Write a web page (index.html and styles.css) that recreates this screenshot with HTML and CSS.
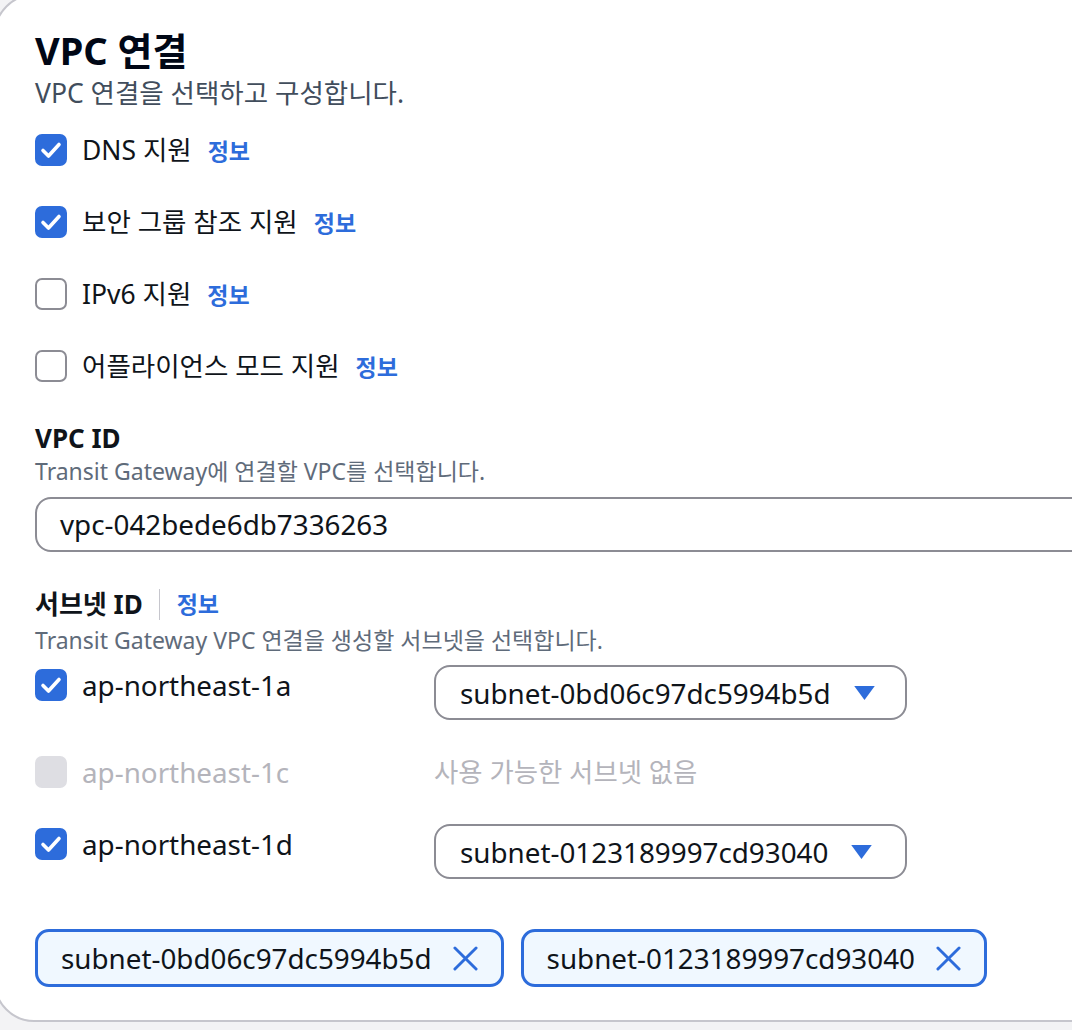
FILE: index.html
```html
<!DOCTYPE html>
<html lang="ko">
<head>
    <meta charset="UTF-8">
    <meta name="viewport" content="width=device-width, initial-scale=1.0">
    <title>VPC 연결</title>
    <link rel="stylesheet" href="styles.css">
</head>

<body>
    <div class="panel">
        <h1 class="panel-title">VPC 연결</h1>
        <p class="panel-desc">VPC 연결을 선택하고 구성합니다.</p>

        <!-- 연결 옵션 -->
        <div class="options">
            <div class="check-row">
                <span class="box checked"><svg viewBox="0 0 32 32"><polyline points="8,16.5 13.5,22 24,10.5" /></svg></span>
                <span class="check-label">DNS 지원</span>
                <a class="info">정보</a>
            </div>
            <div class="check-row">
                <span class="box checked"><svg viewBox="0 0 32 32"><polyline points="8,16.5 13.5,22 24,10.5" /></svg></span>
                <span class="check-label">보안 그룹 참조 지원</span>
                <a class="info">정보</a>
            </div>
            <div class="check-row">
                <span class="box"></span>
                <span class="check-label">IPv6 지원</span>
                <a class="info">정보</a>
            </div>
            <div class="check-row">
                <span class="box"></span>
                <span class="check-label">어플라이언스 모드 지원</span>
                <a class="info">정보</a>
            </div>
        </div>

        <!-- VPC 선택 -->
        <div class="field">
            <div class="field-label">VPC ID</div>
            <div class="field-hint">Transit Gateway에 연결할 VPC를 선택합니다.</div>
            <div class="text-input">vpc-042bede6db7336263</div>
        </div>

        <!-- 서브넷 선택 -->
        <div class="field subnet-field">
            <div class="field-label">서브넷 ID <span class="divider"></span><a class="info">정보</a></div>
            <div class="field-hint">Transit Gateway VPC 연결을 생성할 서브넷을 선택합니다.</div>

            <div class="subnet-grid">
                <div class="check-row">
                    <span class="box checked"><svg viewBox="0 0 32 32"><polyline points="8,16.5 13.5,22 24,10.5" /></svg></span>
                    <span class="check-label az">ap-northeast-1a</span>
                </div>
                <div class="select">
                    <span>subnet-0bd06c97dc5994b5d</span>
                    <svg class="caret" viewBox="0 0 22 15"><polygon points="0,0 22,0 11,15" /></svg>
                </div>

                <div class="check-row disabled">
                    <span class="box"></span>
                    <span class="check-label az">ap-northeast-1c</span>
                </div>
                <div class="no-subnet">사용 가능한 서브넷 없음</div>

                <div class="check-row">
                    <span class="box checked"><svg viewBox="0 0 32 32"><polyline points="8,16.5 13.5,22 24,10.5" /></svg></span>
                    <span class="check-label az">ap-northeast-1d</span>
                </div>
                <div class="select">
                    <span>subnet-0123189997cd93040</span>
                    <svg class="caret" viewBox="0 0 22 15"><polygon points="0,0 22,0 11,15" /></svg>
                </div>
            </div>

            <div class="tokens">
                <div class="token">
                    <span>subnet-0bd06c97dc5994b5d</span>
                    <svg class="remove" viewBox="0 0 26 26"><line x1="2" y1="2" x2="24" y2="24" /><line x1="24" y1="2" x2="2" y2="24" /></svg>
                </div>
                <div class="token">
                    <span>subnet-0123189997cd93040</span>
                    <svg class="remove" viewBox="0 0 26 26"><line x1="2" y1="2" x2="24" y2="24" /><line x1="24" y1="2" x2="2" y2="24" /></svg>
                </div>
            </div>
        </div>
    </div>
</body>
</html>
```

FILE: styles.css
```css
body {
    font-family: 'Noto Sans', 'Noto Sans CJK KR', sans-serif;
    background-color: #f3f3f5;
    color: #0f141a;
    margin: 0;
    padding: 0;
    height: 1030px;
    overflow: hidden;
}

.panel {
    width: 1200px;
    margin: -6px 0 0 -6px;
    padding: 30px 0 33px 39px;
    background-color: #fff;
    border: 2px solid #c6c6cd;
    border-radius: 40px;
}

.panel-title {
    font-size: 38px;
    font-weight: 700;
    line-height: 48px;
    color: #000716;
    margin: 0;
}

.panel-desc {
    font-size: 26.5px;
    line-height: 38px;
    color: #414d5c;
    margin: 0;
}

.options {
    display: flex;
    flex-direction: column;
    gap: 32px;
    margin-top: 18px;
}

.check-row {
    display: flex;
    align-items: center;
    height: 40px;
}

.box {
    width: 32px;
    height: 32px;
    box-sizing: border-box;
    border: 2px solid #8c8c94;
    border-radius: 7px;
    background-color: #fff;
    flex-shrink: 0;
}

.box.checked {
    background-color: #2d6cdb;
    border-color: #2d6cdb;
}

.box svg {
    display: block;
    width: 32px;
    height: 32px;
    margin: -2px;
}

.box polyline {
    fill: none;
    stroke: #fff;
    stroke-width: 3.6;
    stroke-linecap: round;
    stroke-linejoin: round;
}

.check-label {
    font-size: 26.5px;
    line-height: 40px;
    margin-left: 15px;
}

.check-label.az {
    font-size: 27.8px;
}

.info {
    color: #2d6cdb;
    font-size: 23px;
    font-weight: 700;
    margin-left: 16px;
    cursor: pointer;
}

.field {
    margin-top: 34px;
}

.field-label {
    font-size: 26px;
    font-weight: 700;
    line-height: 36px;
    display: flex;
    align-items: center;
}

.field-label .divider {
    display: inline-block;
    width: 1px;
    height: 31px;
    background-color: #c6c6cd;
    margin: 0 17px 0 16px;
}

.field-label .info {
    margin-left: 0;
}

.field-hint {
    font-size: 23px;
    line-height: 28px;
    margin-top: 1px;
    color: #5f6b7a;
}

.text-input {
    margin-top: 12px;
    height: 55px;
    box-sizing: border-box;
    border: 2px solid #8c8c94;
    border-radius: 16px;
    padding: 0 23px;
    font-size: 27.8px;
    line-height: 51px;
}

.subnet-field {
    margin-top: 34px;
}

.subnet-field .field-hint {
    margin-top: 4px;
}

.subnet-grid {
    display: grid;
    grid-template-columns: 399px auto;
    justify-content: start;
    align-items: start;
    row-gap: 32px;
    margin-top: 11px;
}

.select {
    display: flex;
    align-items: center;
    height: 55px;
    box-sizing: border-box;
    border: 2px solid #8c8c94;
    border-radius: 16px;
    padding: 0 30px 0 24px;
    font-size: 27.8px;
}

.caret {
    width: 21px;
    height: 14px;
    margin-left: 23px;
    fill: #2d6cdb;
}

.check-row.disabled .box {
    background-color: #dedee3;
    border-color: #dedee3;
}

.check-row.disabled .check-label,
.no-subnet {
    color: #b4b4bb;
}

.no-subnet {
    font-size: 26.4px;
    line-height: 40px;
}

.tokens {
    display: flex;
    gap: 17px;
    margin-top: 50px;
}

.token {
    display: flex;
    align-items: center;
    height: 58px;
    box-sizing: border-box;
    border: 3px solid #2d6cdb;
    border-radius: 14px;
    background-color: #f0f8ff;
    padding: 0 23px;
    font-size: 27.8px;
}

.remove {
    width: 25px;
    height: 25px;
    margin-left: 21px;
}

.remove line {
    stroke: #2d6cdb;
    stroke-width: 3;
    stroke-linecap: round;
}
```
